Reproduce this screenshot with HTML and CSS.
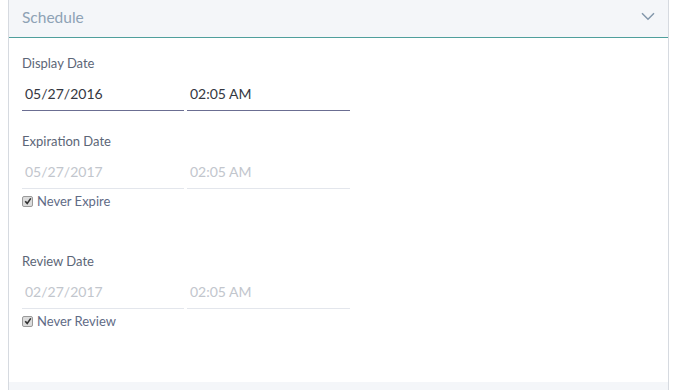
FILE: index.html
```html
<!DOCTYPE html>
<html>
<head>
<meta charset="utf-8">
<link rel="stylesheet" href="styles.css">
</head>
<body>
<section class="panel">
  <header class="panel-head">
    <span class="panel-title">Schedule</span>
    <svg class="chevron" width="14" height="9" viewBox="0 0 14 9"><path d="M1 1.2 L7 7.2 L13 1.2" fill="none" stroke="#8397ab" stroke-width="1.5"/></svg>
  </header>
  <div class="panel-body">
    <div class="group">
      <div class="label">Display Date</div>
      <div class="fields">
        <div class="field date">05/27/2016</div>
        <div class="field time">02:05 AM</div>
      </div>
    </div>
    <div class="group">
      <div class="label">Expiration Date</div>
      <div class="fields">
        <div class="field date disabled">05/27/2017</div>
        <div class="field time disabled">02:05 AM</div>
      </div>
      <div class="check"><span class="box"><svg width="8" height="8" viewBox="0 0 8 8"><path d="M1.2 4.2 L3.2 6.4 L6.8 1.4" fill="none" stroke="#333" stroke-width="1.6"/></svg></span>Never Expire</div>
    </div>
    <div class="group review">
      <div class="label">Review Date</div>
      <div class="fields">
        <div class="field date disabled">02/27/2017</div>
        <div class="field time disabled">02:05 AM</div>
      </div>
      <div class="check"><span class="box"><svg width="8" height="8" viewBox="0 0 8 8"><path d="M1.2 4.2 L3.2 6.4 L6.8 1.4" fill="none" stroke="#333" stroke-width="1.6"/></svg></span>Never Review</div>
    </div>
  </div>
  <footer class="panel-foot"></footer>
</section>
</body>
</html>
```
FILE: styles.css
```css
html, body {
  margin: 0;
  padding: 0;
  background: #ffffff;
}
body {
  padding-left: 8px;
  font-family: Lato, "Open Sans", sans-serif;
}
.panel {
  width: 661px;
  border-left: 1px solid #d6dae0;
  border-right: 1px solid #d6dae0;
  display: flex;
  flex-direction: column;
  height: 390px;
  box-sizing: border-box;
}
.panel-head {
  height: 37px;
  background: #f4f6f9;
  border-bottom: 1px solid #4f9f9c;
  display: flex;
  align-items: center;
  justify-content: space-between;
  padding: 0 13px 0 13px;
}
.panel-title {
  font-size: 15.5px;
  color: #8ea2b5;
  margin-top: -4px;
}
.chevron {
  margin-top: -4px;
}
.panel-body {
  flex: 1;
  padding: 16px 13px 0 13px;
}
.group + .group {
  margin-top: 21px;
}
.group.review {
  margin-top: 42px;
}
.label {
  font-size: 13px;
  line-height: 18px;
  height: 18px;
  color: #5c6677;
}
.fields {
  display: flex;
  gap: 3px;
  margin-top: 6px;
}
.field {
  height: 32px;
  line-height: 32px;
  border-bottom: 1px solid #6b6e92;
  font-size: 14px;
  color: #343741;
  padding-left: 3px;
  box-sizing: content-box;
}
.field.date {
  width: 159px;
}
.field.time {
  width: 160px;
}
.field.disabled {
  color: #c2c6cd;
  border-bottom-color: #e3e6ec;
}
.check {
  margin-top: 3px;
  height: 18px;
  line-height: 18px;
  font-size: 13px;
  color: #5f6b86;
  display: flex;
  align-items: center;
}
.box {
  width: 9px;
  height: 9px;
  border: 1px solid #9a9a9a;
  border-radius: 2px;
  background: #dcdcdc;
  display: inline-flex;
  align-items: center;
  justify-content: center;
  margin-right: 4px;
}
.panel-foot {
  height: 8px;
  background: #f4f6f9;
}
```
